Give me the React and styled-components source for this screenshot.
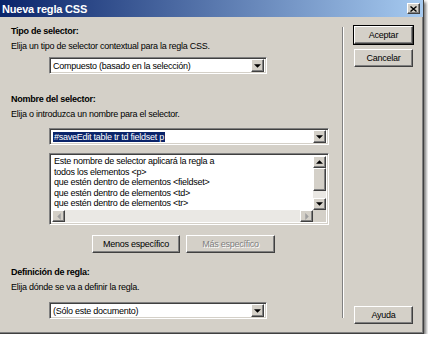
import React from 'react';
import styled, { createGlobalStyle, css } from 'styled-components';

const GlobalStyle = createGlobalStyle`
  html, body {
    margin: 0;
    padding: 0;
    background: #ffffff;
  }
  body {
    font-family: 'Liberation Sans', Arial, sans-serif;
    font-size: 9px;
    letter-spacing: -0.25px;
    color: #000;
  }
`;

const raised = css`
  border-style: solid;
  border-width: 1px;
  border-color: #ffffff #404040 #404040 #ffffff;
  box-shadow: inset -1px -1px 0 #808080;
`;

const sunken = css`
  border-style: solid;
  border-width: 1px;
  border-color: #808080 #ffffff #ffffff #808080;
  box-shadow: inset 1px 1px 0 #404040, inset -1px -1px 0 #d4d0c8;
`;

function Arrow({ dir = 'down', color = '#000' }) {
  const pts = {
    down: '0,0 6,0 3,3',
    up: '0,3 6,3 3,0',
    right: '0,0 3,3 0,6',
    left: '3,0 0,3 3,6',
  }[dir];
  const side = dir === 'right' || dir === 'left';
  const w = side ? 4 : 7;
  const h = side ? 7 : 4;
  return (
    <svg width={w} height={h} viewBox={`0 0 ${w - 1} ${h - 1}`}>
      <polygon points={pts} fill={color} />
    </svg>
  );
}

function Select({ value, width }) {
  return (
    <SelectBox $width={width}>
      <SelectText>{value}</SelectText>
      <ArrowButton>
        <Arrow />
      </ArrowButton>
    </SelectBox>
  );
}

export default function App() {
  return (
    <>
      <GlobalStyle />
      <Dialog>
        <TitleBar>
          <Title>Nueva regla CSS</Title>
          <CloseButton>
            <svg width="7" height="6" viewBox="0 0 7 6">
              <path d="M0.5 0.5 L6.5 5.5 M6.5 0.5 L0.5 5.5" stroke="#000" strokeWidth="1.4" />
            </svg>
          </CloseButton>
        </TitleBar>
        <Body>
          <Main>
            <Heading>Tipo de selector:</Heading>
            <Hint>Elija un tipo de selector contextual para la regla CSS.</Hint>
            <Indent $top={5}>
              <Select value="Compuesto (basado en la selección)" width={218} />
            </Indent>

            <Heading $top={19}>Nombre del selector:</Heading>
            <Hint>Elija o introduzca un nombre para el selector.</Hint>
            <Indent $top={8}>
              <SelectBox $width={280}>
                <SelectText>
                  <Highlight>#saveEdit table tr td fieldset p</Highlight>
                </SelectText>
                <ArrowButton>
                  <Arrow />
                </ArrowButton>
              </SelectBox>
            </Indent>
            <Indent $top={8}>
              <TextArea>
                <TextLines>
                  <div>Este nombre de selector aplicará la regla a</div>
                  <div>todos los elementos &lt;p&gt;</div>
                  <div>que estén dentro de elementos &lt;fieldset&gt;</div>
                  <div>que estén dentro de elementos &lt;td&gt;</div>
                  <div>que estén dentro de elementos &lt;tr&gt;</div>
                </TextLines>
                <VScroll>
                  <ScrollButton>
                    <Arrow dir="up" />
                  </ScrollButton>
                  <Thumb />
                  <Track />
                  <ScrollButton>
                    <Arrow dir="down" />
                  </ScrollButton>
                </VScroll>
                <HScroll>
                  <ScrollButton>
                    <Arrow dir="left" color="#a0a0a0" />
                  </ScrollButton>
                  <HTrack />
                  <ScrollButton>
                    <Arrow dir="right" color="#a0a0a0" />
                  </ScrollButton>
                </HScroll>
                <Corner />
              </TextArea>
            </Indent>
            <ButtonRow>
              <Button $width={88}>Menos específico</Button>
              <Button $width={89} disabled>Más específico</Button>
            </ButtonRow>

            <Heading $top={13}>Definición de regla:</Heading>
            <Hint>Elija dónde se va a definir la regla.</Hint>
            <Indent $top={9}>
              <Select value="(Sólo este documento)" width={218} />
            </Indent>
          </Main>
          <Separator />
          <Side>
            <DefaultButton>Aceptar</DefaultButton>
            <Button $width={59}>Cancelar</Button>
            <Button $width={59} $push>Ayuda</Button>
          </Side>
        </Body>
      </Dialog>
    </>
  );
}

const Dialog = styled.div`
  width: 424px;
  height: 334px;
  box-sizing: border-box;
  background: #d4d0c8;
  border-right: 1px solid #404040;
  border-bottom: 1px solid #404040;
  box-shadow: inset -1px -1px 0 #808080, 2px 2px 3px rgba(0, 0, 0, 0.55);
  display: flex;
  flex-direction: column;
`;

const TitleBar = styled.div`
  height: 17px;
  flex: none;
  display: flex;
  align-items: center;
  justify-content: space-between;
  padding: 0 3px 0 2px;
  background: linear-gradient(to right, #0a246a, #a6caf0);
`;

const Title = styled.span`
  color: #ffffff;
  font-weight: bold;
  font-size: 11px;
  letter-spacing: -0.2px;
`;

const CloseButton = styled.div`
  ${raised};
  box-sizing: border-box;
  width: 13px;
  height: 11px;
  background: #d4d0c8;
  display: flex;
  align-items: center;
  justify-content: center;
`;

const Body = styled.div`
  flex: 1;
  display: flex;
`;

const Main = styled.div`
  width: 331px;
  padding: 8px 0 0 11px;
  display: flex;
  flex-direction: column;
`;

const Heading = styled.div`
  font-weight: bold;
  line-height: 12px;
  margin-top: ${(p) => p.$top || 0}px;
`;

const Hint = styled.div`
  line-height: 12px;
  margin-top: 3px;
`;

const Indent = styled.div`
  padding-left: 38px;
  margin-top: ${(p) => p.$top}px;
`;

const SelectBox = styled.div`
  ${sunken};
  width: ${(p) => p.$width}px;
  height: 17px;
  box-sizing: border-box;
  background: #ffffff;
  display: flex;
  align-items: center;
  padding: 2px;
`;

const SelectText = styled.div`
  flex: 1;
  padding-left: 1px;
  line-height: 12px;
  white-space: nowrap;
  overflow: hidden;
`;

const Highlight = styled.span`
  background: #0a246a;
  color: #ffffff;
  padding: 0 1px;
`;

const ArrowButton = styled.div`
  ${raised};
  box-sizing: border-box;
  width: 13px;
  height: 13px;
  background: #d4d0c8;
  display: flex;
  align-items: center;
  justify-content: center;
`;

const TextArea = styled.div`
  ${sunken};
  width: 280px;
  height: 72px;
  box-sizing: border-box;
  background: #ffffff;
  padding: 2px;
  display: grid;
  grid-template-columns: 1fr 13px;
  grid-template-rows: 1fr 12px;
`;

const TextLines = styled.div`
  font-size: 9px;
  line-height: 10.5px;
  padding: 0 0 0 2px;
  white-space: nowrap;
  overflow: hidden;
`;

const VScroll = styled.div`
  display: flex;
  flex-direction: column;
`;

const ScrollButton = styled.div`
  ${raised};
  box-sizing: border-box;
  width: 13px;
  height: 12px;
  background: #d4d0c8;
  display: flex;
  align-items: center;
  justify-content: center;
`;

const Thumb = styled.div`
  ${raised};
  box-sizing: border-box;
  height: 23px;
  background: #d4d0c8;
`;

const Track = styled.div`
  flex: 1;
  background: #eae8e4;
`;

const HScroll = styled.div`
  display: flex;
`;

const HTrack = styled.div`
  flex: 1;
  background: #eae8e4;
`;

const Corner = styled.div`
  background: #d4d0c8;
`;

const ButtonRow = styled.div`
  display: flex;
  gap: 6px;
  margin-top: 10px;
  padding-left: 81px;
`;

const Button = styled.div`
  ${raised};
  box-sizing: border-box;
  width: ${(p) => p.$width}px;
  height: 18px;
  background: #d4d0c8;
  display: flex;
  align-items: center;
  justify-content: center;
  color: ${(p) => (p.disabled ? '#808080' : '#000')};
  text-shadow: ${(p) => (p.disabled ? '1px 1px 0 #ffffff' : 'none')};
  margin-top: ${(p) => (p.$push ? 'auto' : '0')};
`;

const DefaultButton = styled(Button).attrs({ $width: 59 })`
  outline: 1px solid #000;
  outline-offset: 0;
`;

const Separator = styled.div`
  width: 0;
  border-left: 1px solid #808080;
  border-right: 1px solid #ffffff;
  margin: 10px 0 15px 0;
`;

const Side = styled.div`
  padding: 9px 0 9px 10px;
  display: flex;
  flex-direction: column;
  gap: 5px;
`;
